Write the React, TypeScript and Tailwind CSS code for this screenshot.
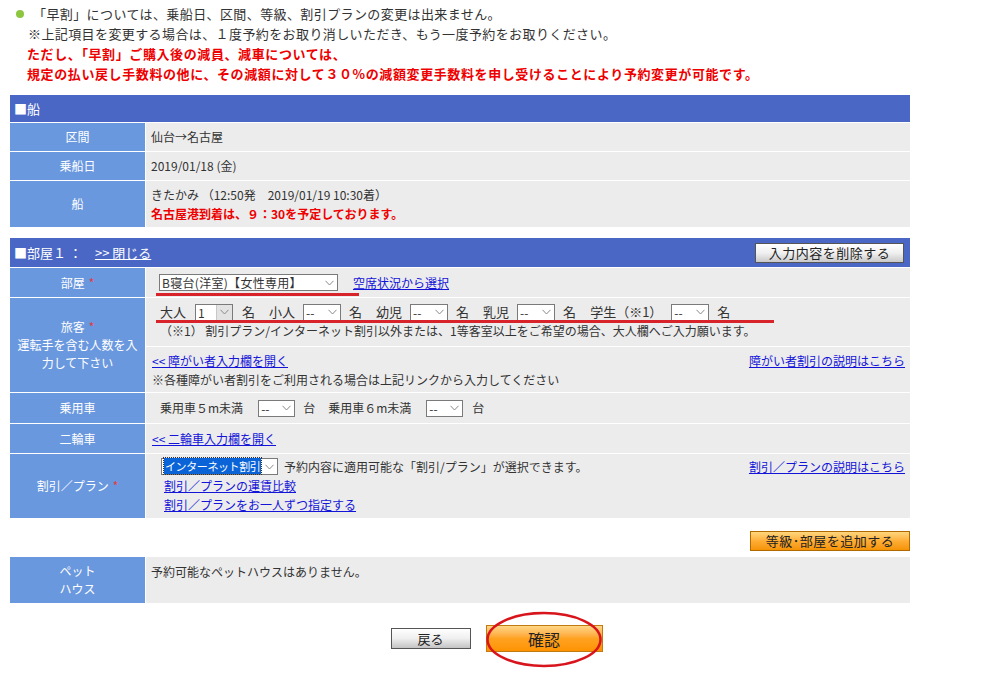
import React from 'react';

const font = { fontFamily: '"Noto Sans CJK JP", "Noto Sans", sans-serif' };

const Chevron = () => (
  <svg width="9" height="6" viewBox="0 0 9 6" fill="none" stroke="#8a8a8a" strokeWidth="1">
    <path d="M0.5 0.8 L4.5 5 L8.5 0.8" />
  </svg>
);

interface SelProps {
  value: string;
  className: string;
  textClass?: string;
  grayArrow?: boolean;
  highlight?: boolean;
}

const Sel: React.FC<SelProps> = ({ value, className, textClass, grayArrow, highlight }) => (
  <span className={`inline-flex items-center h-[17px] border border-[#7a7a7a] bg-white align-middle ${className}`}>
    <span className={`flex-1 pl-[2px] leading-[15px] whitespace-nowrap ${textClass ?? ''}`}>
      {highlight ? <span className="bg-[#0a64d8] text-white px-[1px] outline outline-1 outline-dotted outline-[#333]">{value}</span> : value}
    </span>
    <span className={`w-[16px] h-full shrink-0 flex items-center justify-center ${grayArrow ? 'bg-[#e3e3e3] border-l border-[#c8c8c8]' : ''}`}>
      <Chevron />
    </span>
  </span>
);

const Label: React.FC<{ children: React.ReactNode; className?: string }> = ({ children, className }) => (
  <div className={`w-[135px] shrink-0 bg-[#6a98de] text-white flex items-center justify-center text-center ${className ?? ''}`}>
    {children}
  </div>
);

const Req = () => <span className="text-[#e8383d] ml-[4px]">*</span>;

const A: React.FC<{ children: React.ReactNode; className?: string }> = ({ children, className }) => (
  <a href="#" className={`text-[#1414d8] underline ${className ?? ''}`}>{children}</a>
);

export default function App() {
  return (
    <div className="w-[999px] h-[681px] bg-white text-[#333] overflow-hidden" style={font}>
      {/* notice */}
      <div className="pt-[4px] text-[13px] leading-[20px]">
        <div className="flex items-center pl-[16px] tracking-[0.4px]">
          <span className="w-[8px] h-[8px] rounded-full bg-[#8dc63f] mr-[9px]" />
          <span>「早割」については、乗船日、区間、等級、割引プランの変更は出来ません。</span>
        </div>
        <div className="pl-[28px] tracking-[0.4px]">※上記項目を変更する場合は、１度予約をお取り消しいただき、もう一度予約をお取りください。</div>
        <div className="pl-[27px] text-[#ee0000] font-bold tracking-[0.6px]">ただし、「早割」ご購入後の減員、減車については、</div>
        <div className="pl-[27px] text-[#ee0000] font-bold tracking-[0.6px]">規定の払い戻し手数料の他に、その減額に対して３０%の減額変更手数料を申し受けることにより予約変更が可能です。</div>
      </div>

      {/* ship */}
      <div className="ml-[10px] w-[900px] mt-[11px] text-[12px] flex flex-col gap-px">
        <div className="h-[27px] bg-[#4b67c5] text-white flex items-center pl-[4px] text-[13px]">■船</div>
        <div className="flex gap-px h-[28px]">
          <Label>区間</Label>
          <div className="flex-1 bg-[#ececec] flex items-center pl-[5px]">仙台→名古屋</div>
        </div>
        <div className="flex gap-px h-[28px]">
          <Label>乗船日</Label>
          <div className="flex-1 bg-[#ececec] flex items-center pl-[5px]">2019/01/18 (金)</div>
        </div>
        <div className="flex gap-px h-[46px]">
          <Label>船</Label>
          <div className="flex-1 bg-[#ececec] pl-[5px] pt-[4px] leading-[19px]">
            <div>きたかみ （12:50発　2019/01/19 10:30着）</div>
            <div className="text-[#ee0000] font-bold">名古屋港到着は、９：30を予定しております。</div>
          </div>
        </div>
      </div>

      {/* room */}
      <div className="ml-[10px] w-[900px] mt-[11px] text-[12px] flex flex-col gap-px">
        <div className="h-[29px] bg-[#4b67c5] text-white flex items-center justify-between pl-[4px] pr-[6px] text-[13px]">
          <span>
            ■部屋１ ：　<a href="#" className="underline text-white">&gt;&gt;&nbsp;閉じる</a>
          </span>
          <button className="w-[149px] h-[20px] border border-[#555] bg-gradient-to-b from-white via-[#f0f0f0] to-[#c9c9c9] text-[#222] text-[13px] leading-[18px] tracking-[0.5px]">
            入力内容を削除する
          </button>
        </div>

        <div className="flex gap-px h-[29px]">
          <Label>部屋<Req /></Label>
          <div className="flex-1 bg-[#ececec] relative flex items-center pl-[13px]">
            <Sel value="B寝台(洋室)【女性専用】" className="w-[179px]" textClass="text-[12px] tracking-[0.3px]" />
            <A className="ml-[15px]">空席状況から選択</A>
            <span className="absolute left-[10px] top-[25px] w-[203px] h-[3px] bg-[#d8232a]" />
          </div>
        </div>

        <div className="flex gap-px">
          <Label className="flex-col leading-[18px] px-[6px]">
            <div>旅客<Req /></div>
            <div>運転手を含む人数を入力して下さい</div>
          </Label>
          <div className="flex-1 flex flex-col gap-px">
            <div className="bg-[#ececec] h-[48px] relative pl-[14px] pt-[5px] leading-[18px]">
              <div className="flex items-center gap-[8px] text-[13px] h-[18px]">
                <span>大人</span>
                <Sel value="1" className="w-[38px] ml-[1px]" textClass="text-[12px]" grayArrow />
                <span className="ml-[1px]">名</span>
                <span className="ml-[6px]">小人</span>
                <Sel value="--" className="w-[38px]" textClass="text-[12px]" />
                <span>名</span>
                <span className="ml-[6px]">幼児</span>
                <Sel value="--" className="w-[38px]" textClass="text-[12px]" />
                <span>名</span>
                <span className="ml-[6px]">乳児</span>
                <Sel value="--" className="w-[38px]" textClass="text-[12px]" />
                <span>名</span>
                <span className="ml-[6px]">学生（※1）</span>
                <Sel value="--" className="w-[38px] ml-[1px]" textClass="text-[12px]" />
                <span>名</span>
              </div>
              <div className="mt-[1px]">（※1） 割引プラン/インターネット割引以外または、1等客室以上をご希望の場合、大人欄へご入力願います。</div>
              <span className="absolute left-[10px] top-[22px] w-[618px] h-[3px] bg-[#d8232a]" />
            </div>
            <div className="bg-[#ececec] h-[45px] pl-[6px] pr-[5px] pt-[4px] leading-[19px]">
              <div className="flex justify-between">
                <A>&lt;&lt;&nbsp;障がい者入力欄を開く</A>
                <A>障がい者割引の説明はこちら</A>
              </div>
              <div>※各種障がい者割引をご利用される場合は上記リンクから入力してください</div>
            </div>
          </div>
        </div>

        <div className="flex gap-px h-[30px]">
          <Label>乗用車</Label>
          <div className="flex-1 bg-[#ececec] flex items-center pl-[14px] text-[12px]">
            <span>乗用車５m未満</span>
            <Sel value="--" className="w-[37px] ml-[15px]" />
            <span className="ml-[8px]">台</span>
            <span className="ml-[13px]">乗用車６m未満</span>
            <Sel value="--" className="w-[37px] ml-[15px]" />
            <span className="ml-[9px]">台</span>
          </div>
        </div>

        <div className="flex gap-px h-[29px]">
          <Label>二輪車</Label>
          <div className="flex-1 bg-[#ececec] flex items-center pl-[6px]">
            <A>&lt;&lt;&nbsp;二輪車入力欄を開く</A>
          </div>
        </div>

        <div className="flex gap-px h-[64px]">
          <Label>割引／プラン<Req /></Label>
          <div className="flex-1 bg-[#ececec] pl-[15px] pr-[5px] pt-[3px] leading-[19px]">
            <div className="flex items-center justify-between">
              <div className="flex items-center">
                <Sel value="インターネット割引" className="w-[117px]" textClass="text-[11px] tracking-[-0.4px]" highlight />
                <span className="ml-[6px]">予約内容に適用可能な「割引/プラン」が選択できます。</span>
              </div>
              <A className="text-[#3b4fc9]">割引／プランの説明はこちら</A>
            </div>
            <div className="pl-[3px]"><A>割引／プランの運賃比較</A></div>
            <div className="pl-[3px]"><A>割引／プランをお一人ずつ指定する</A></div>
          </div>
        </div>

        <div className="flex justify-end h-[37px] items-start pt-[12px]">
          <button className="w-[160px] h-[20px] border border-[#b06a00] bg-gradient-to-b from-[#ffd77d] via-[#ffad33] to-[#f59300] text-[#222] text-[13px] leading-[18px] tracking-[0.5px]">
            等級･部屋を追加する
          </button>
        </div>

        <div className="flex gap-px h-[46px]">
          <Label className="flex-col leading-[18px]">
            <div>ペット</div>
            <div>ハウス</div>
          </Label>
          <div className="flex-1 bg-[#ececec] pl-[5px] pt-[6px]">予約可能なペットハウスはありません。</div>
        </div>
      </div>

      {/* buttons */}
      <div className="w-[999px] flex justify-center items-center gap-[15px] mt-[22px] pr-[6px] text-[13px]">
        <button className="w-[80px] h-[21px] border border-[#555] bg-gradient-to-b from-white via-[#efefef] to-[#c4c4c4] text-[#222]">
          戻る
        </button>
        <div className="relative">
          <button className="w-[117px] h-[27px] border border-[#c07a10] bg-gradient-to-b from-[#ffd685] via-[#ffa21f] to-[#ff9300] text-[#222] text-[16px]">
            確認
          </button>
          <svg className="absolute left-[-1px] top-[-14px] pointer-events-none" width="118" height="57" viewBox="0 0 118 57">
            <ellipse cx="59" cy="28.5" rx="56.5" ry="26.5" fill="none" stroke="#d8141c" strokeWidth="2.5" />
          </svg>
        </div>
      </div>
    </div>
  );
}
